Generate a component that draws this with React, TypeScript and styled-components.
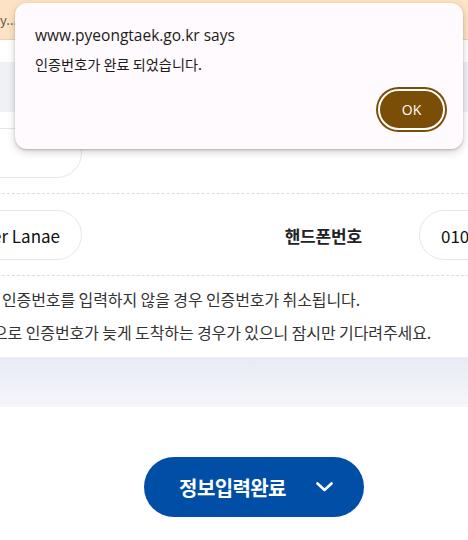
import styled, { createGlobalStyle } from 'styled-components';

// Verification step of a member-info form, with the browser's native alert on top.

const GlobalStyle = createGlobalStyle`
  html, body {
    margin: 0;
    padding: 0;
    background: #fff;
  }
  body {
    font-family: "Noto Sans CJK KR", "Noto Sans", sans-serif;
    color: #222;
  }
`;

const Page = styled.div`
  position: relative;
  width: 468px;
  height: 540px;
  overflow: hidden;
  background: #fff;
`;

const NoticeBar = styled.div`
  height: 40px;
  display: flex;
  align-items: center;
  background: #fde3c3;
  border-bottom: 1px solid #ead1b0;
  box-sizing: border-box;
  font-size: 13px;
  color: #555;
  white-space: nowrap;
`;

const HeaderGap = styled.div`
  height: 22px;
`;

const TabBand = styled.div`
  height: 50px;
  background: #eff1f6;
`;

const FormTable = styled.div`
  display: flex;
  flex-direction: column;
`;

const FormRow = styled.div`
  display: flex;
  align-items: center;
  width: 737px;
  margin-left: -118px;
  padding: 16px 0 15px;
  border-bottom: 1px dashed #dcdcdc;
`;

const Pill = styled.div<{ $align?: 'left' | 'right' }>`
  flex: 0 0 200px;
  height: 50px;
  box-sizing: border-box;
  display: flex;
  align-items: center;
  justify-content: ${(p) => (p.$align === 'right' ? 'flex-end' : 'flex-start')};
  padding: ${(p) => (p.$align === 'right' ? '0 21px 0 0' : '0 0 0 21px')};
  border: 1px solid #e6e6e6;
  border-radius: 25px;
  font-size: 17px;
  color: #111;
  white-space: nowrap;
  overflow: hidden;
`;

const FieldLabel = styled.div`
  margin-left: auto;
  margin-right: 57px;
  font-size: 17px;
  font-weight: 700;
  color: #222;
  letter-spacing: -0.01em;
`;

const Notes = styled.div`
  display: flex;
  flex-direction: column;
  gap: 11px;
  padding: 12px 0 14px;
`;

const NoteLine = styled.p<{ $indent: number }>`
  margin: 0 0 0 ${(p) => p.$indent}px;
  font-size: 16px;
  line-height: 22px;
  color: #333;
  letter-spacing: -0.1px;
  white-space: nowrap;
`;

const FadeBand = styled.div`
  height: 50px;
  background: linear-gradient(#e8ebf4, #f5f6fa);
`;

const Actions = styled.div`
  padding: 50px 0 0 144px;
`;

const SubmitButton = styled.button`
  width: 220px;
  height: 60px;
  border: 0;
  border-radius: 30px;
  background: #004ea6;
  color: #fff;
  display: flex;
  align-items: center;
  justify-content: center;
  gap: 30px;
  padding: 0 0 0 4px;
  font-family: inherit;
  font-size: 20px;
  font-weight: 700;
  letter-spacing: -0.03em;
  cursor: pointer;
`;

const AlertBox = styled.div`
  position: absolute;
  left: 15px;
  top: 3px;
  width: 448px;
  height: 146px;
  box-sizing: border-box;
  padding: 22px 18px 0 20px;
  background: #fefafd;
  border-radius: 12px;
  box-shadow: 0 1px 2px rgba(80, 50, 20, 0.25), 0 3px 8px rgba(0, 0, 0, 0.18);
  display: flex;
  flex-direction: column;
`;

const AlertTitle = styled.div`
  font-family: "Open Sans", "Noto Sans", sans-serif;
  font-size: 15.5px;
  line-height: 20px;
  color: #1e1b18;
`;

const AlertMessage = styled.div`
  margin-top: 10px;
  font-family: "Noto Sans CJK KR", sans-serif;
  font-size: 14.2px;
  line-height: 18px;
  color: #1e1b18;
`;

const AlertActions = styled.div`
  display: flex;
  justify-content: flex-end;
  margin-top: 16px;
`;

const OkButton = styled.button`
  width: 67px;
  height: 41px;
  border: 2px solid #fff;
  border-radius: 21px;
  box-shadow: 0 0 0 2px #7b4e08;
  background: #7b4e08;
  color: #fff;
  font-family: "Open Sans", "Noto Sans", sans-serif;
  font-size: 14px;
  cursor: pointer;
`;

function Chevron() {
  return (
    <svg width="17" height="10" viewBox="0 0 17 10" fill="none">
      <path d="M1.5 1.5 8.5 8 15.5 1.5" stroke="#fff" strokeWidth="2.6" strokeLinecap="round" strokeLinejoin="round" />
    </svg>
  );
}

export default function App() {
  return (
    <Page>
      <GlobalStyle />
      <NoticeBar>y...</NoticeBar>
      <HeaderGap />
      <TabBand />

      <FormTable>
        <FormRow>
          <Pill $align="right" />
        </FormRow>
        <FormRow>
          <Pill $align="right">Jennifer Lanae</Pill>
          <FieldLabel>핸드폰번호</FieldLabel>
          <Pill>01012345678</Pill>
        </FormRow>
      </FormTable>

      <Notes>
        <NoteLine $indent={2}>인증번호를 입력하지 않을 경우 인증번호가 취소됩니다.</NoteLine>
        <NoteLine $indent={-7}>으로 인증번호가 늦게 도착하는 경우가 있으니 잠시만 기다려주세요.</NoteLine>
      </Notes>

      <FadeBand />

      <Actions>
        <SubmitButton>
          정보입력완료
          <Chevron />
        </SubmitButton>
      </Actions>

      <AlertBox role="alertdialog">
        <AlertTitle>www.pyeongtaek.go.kr says</AlertTitle>
        <AlertMessage>인증번호가 완료 되었습니다.</AlertMessage>
        <AlertActions>
          <OkButton>OK</OkButton>
        </AlertActions>
      </AlertBox>
    </Page>
  );
}
